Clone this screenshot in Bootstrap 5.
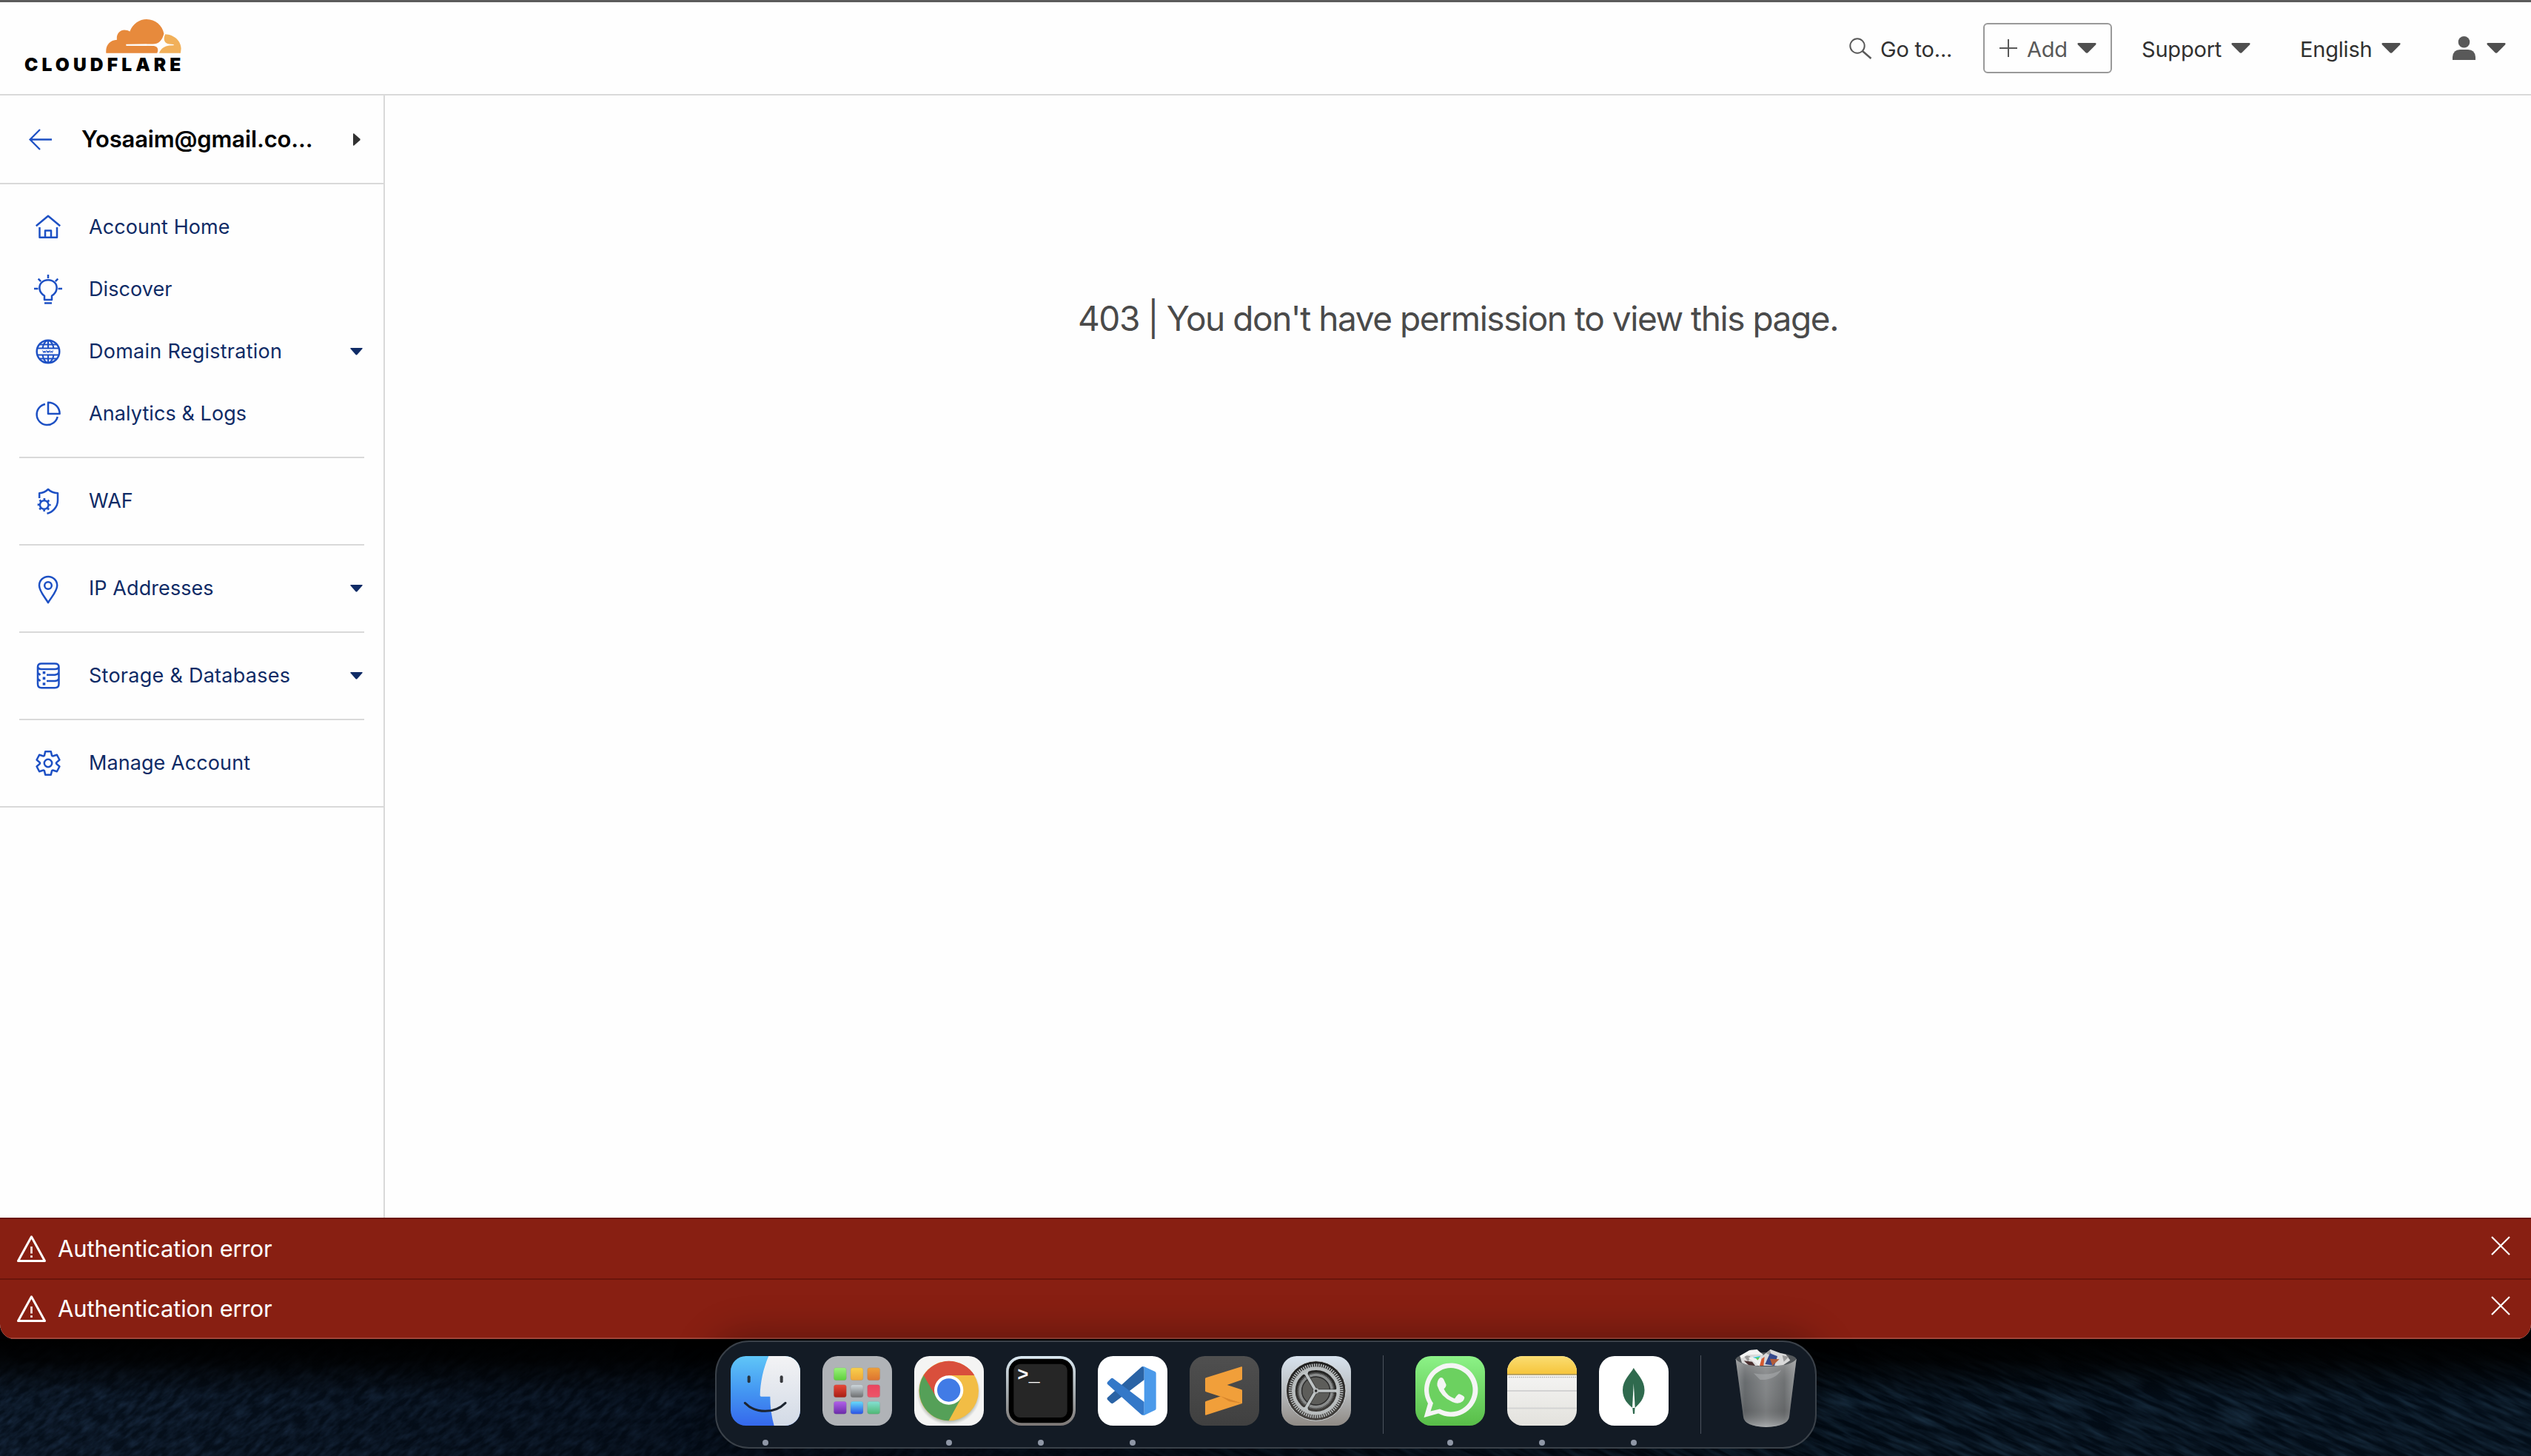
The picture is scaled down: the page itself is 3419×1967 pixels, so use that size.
<!DOCTYPE html>
<html lang="en">
<head>
<meta charset="utf-8">
<meta name="viewport" content="width=device-width, initial-scale=1">
<title>Cloudflare</title>
<link href="https://cdn.jsdelivr.net/npm/bootstrap@5.3.0/dist/css/bootstrap.min.css" rel="stylesheet">
<script src="https://cdn.jsdelivr.net/npm/bootstrap@5.3.0/dist/js/bootstrap.bundle.min.js"></script>
<style>
  body { font-family: Inter, "Liberation Sans", sans-serif; background: #000103; height: 1967px; overflow: hidden; }
  svg { display: block; flex-shrink: 0; }
  .app-window { height: 1809px; background: #fefefe; border-top: 3px solid #5c5c5c; border-radius: 0 0 20px 20px; overflow: hidden; }
  .top-line { height: 1px; margin-top: -3px; margin-bottom: 2px; background: #333; }

  .site-header { height: 126px; border-bottom: 2px solid #d9d9d9; padding: 0 34px 0 33px; color: #313131; font-size: 29px; }
  .brand-logo { width: 216px; padding-top: 23px; }
  .brand-cloud { margin-left: 110px; }
  .brand-name { font-size: 24.6px; font-weight: 900; line-height: 30px; letter-spacing: 5.1px; color: #000; white-space: nowrap; }
  .act { letter-spacing: -.2px; gap: 14px; white-space: nowrap; }
  .act span { padding-top: 3px; }
  .act-goto { width: 181px; gap: 11px; }
  .act-add { width: 174px; height: 68px; margin-right: 40px; border: 2px solid #999; border-radius: 6px; padding: 0 19px 0 20px; color: #595959; gap: 13px; font-size: 29px; }
  .act-support { width: 214px; gap: 13px; }
  .act-lang { width: 206px; gap: 13px; }
  .act-user { width: 72px; gap: 15px; }

  .side { width: 520px; border-right: 2px solid #d9d9d9; }
  .account { height: 120px; border-bottom: 2px solid #d9d9d9; padding-left: 39px; padding-right: 31px; }
  .account-name { font-size: 31px; font-weight: 600; color: #000; letter-spacing: -.15px; margin-left: 39px; }
  .side-menu { border-bottom: 2px solid #d9d9d9; }
  .side-group { margin: 0 26px; padding: 16px 2px 16px 15px; }
  .side-group + .side-group { border-top: 2px solid #d9d9d9; }
  .side-link { height: 84px; color: #0f2b66; font-size: 27px; letter-spacing: .08px; text-decoration: none; gap: 31px; }
  .side-link.loose { letter-spacing: .26px; }
  .side-link svg.ico { stroke: #1d50c4; stroke-width: 2.5; fill: none; stroke-linejoin: round; }
  .denied { font-size: 46px; letter-spacing: -1.45px; line-height: 60px; color: #4a4a4a; padding-top: 271px; }

  .err-bar { height: 82px; background: #881f12; border-top: 2px solid #6a150b; color: #fff; font-size: 31px; letter-spacing: -.15px; padding: 0 28px 0 22px; }
  .err-bar.last { border-bottom: 2px solid #a04438; }
  .err-bar .err-text { margin-left: 15px; }
  .err-bar .err-close { margin-bottom: 8px; }

  .desk { height: 158px; position: relative; padding-top: 2px; background: linear-gradient(90deg, #06101c, #030a14 30%, #020a13 60%, #030d18); }
  .wallpaper { position: absolute; inset: 0; }
  .dock { position: relative; width: 1488px; height: 146px; border: 2px solid #3a4149; border-radius: 46px; background: #131b25; padding: 19px 17px 0 19px; box-shadow: 0 0 50px 10px rgba(0,0,0,.28); }
  .dock-row { gap: 30px; }
  .dock-app { width: 94px; height: 124px; }
  .run-dot { width: 8px; height: 8px; border-radius: 50%; background: #8f97a6; margin-top: 19px; }
  .dock-sep { width: 2px; height: 106px; margin: -1px 13px 0; background: #4b525d; }
  .trash-can { margin-top: -10px; }
</style>
</head>
<body>
<svg width="0" height="0" class="position-absolute">
  <defs>
    <symbol id="tri" viewBox="0 0 26 14"><path d="M1.5 0H24.5Q26.5 .6 25 2.4L14.6 13Q13 14.4 11.4 13L1 2.4Q-.5 .6 1.5 0Z" fill="#4f4f4f"/></symbol>
    <symbol id="car" viewBox="0 0 17 10"><path d="M1 0H16Q17.2 .3 16.4 1.3L9.6 9Q8.500 10 7.400 9L.6 1.300Q-.2 .3 1 0Z" fill="#0f2b66"/></symbol>
    <symbol id="warn" viewBox="0 0 40 38"><path d="M20 2.800L38 35.500H2Z" fill="none" stroke="#fff" stroke-width="3" stroke-linejoin="round"/><path d="M20 16V25.500M20 28V31" stroke="#e9cfcb" stroke-width="3"/></symbol>
    <symbol id="cross" viewBox="0 0 26 26"><path d="M1 1L25 25M25 1L1 25" stroke="#fff" stroke-width="2.200"/></symbol>
  </defs>
</svg>

<div class="app-window d-flex flex-column">
  <div class="top-line"></div>
  <header class="site-header d-flex justify-content-between">
    <a class="brand-logo text-decoration-none" href="#">
      <svg class="brand-cloud" width="102" height="46" viewBox="424 77 299 137" preserveAspectRatio="none">
        <path fill="#e78a3c" d="M425 213C422 182 440 161 468 160C464 136 480 120 497 120Q511 120 519 126C530 95 558 77 585 77C620 77 648 102 654 135C646 165 632 176 610 177L583 177L506 178V183L614 184C629 186 634 198 627 213Z"/>
        <path fill="#fefefe" d="M504 177.500H586V183.500H504Z"/>
        <path fill="#f1b05a" d="M659 137C695 138 722 165 722 195L720 213H635C643 194 656 186 675 183L692 182Q695 180 692 178L675 177C655 173 650 158 659 137Z"/>
      </svg>
      <div class="brand-name">CLOUDFLARE</div>
    </a>
    <nav class="d-flex align-items-center">
      <div class="act act-goto d-flex align-items-center">
        <svg width="31" height="29" viewBox="0 0 31 29" fill="none" stroke="#595959" stroke-width="2"><circle cx="11" cy="11" r="9.700"/><path d="M18 18L29.500 28" stroke-width="2.500"/></svg>
        <span>Go to...</span>
      </div>
      <button class="act act-add btn d-flex align-items-center">
        <svg width="24" height="24" viewBox="0 0 24 24" stroke="#595959" stroke-width="2"><path d="M12 0V24M0 12H24"/></svg>
        <span>Add</span>
        <svg width="26" height="14"><use href="#tri"/></svg>
      </button>
      <div class="act act-support d-flex align-items-center"><span>Support</span><svg width="26" height="14"><use href="#tri"/></svg></div>
      <div class="act act-lang d-flex align-items-center"><span>English</span><svg width="26" height="14"><use href="#tri"/></svg></div>
      <div class="act act-user d-flex align-items-center">
        <svg width="31" height="32" viewBox="0 0 31 32" fill="#595959"><ellipse cx="15.500" cy="7.700" rx="7.800" ry="7.700"/><path d="M0 32V28Q1 18 10 18H21Q30 18 31 28V32Z"/></svg>
        <svg width="26" height="14"><use href="#tri"/></svg>
      </div>
    </nav>
  </header>

  <div class="d-flex flex-grow-1">
    <aside class="side">
      <div class="account d-flex align-items-center">
        <svg width="32" height="29" viewBox="0 0 32 29" fill="none" stroke="#1d50c4" stroke-width="2.300"><path d="M15 1L1.600 14.500L15 28M1.600 14.500H31"/></svg>
        <div class="account-name">Yosaaim@gmail.co...</div>
        <svg class="ms-auto" width="10" height="17" viewBox="0 0 10 17"><path d="M0 1Q0 0 1 .3L9.300 7.500Q10 8.500 9.300 9.500L1 16.700Q0 17 0 16Z" fill="#313131"/></svg>
      </div>
      <nav class="side-menu">
        <div class="side-group">
          <a class="side-link d-flex align-items-center" href="#">
            <svg class="ico" width="48" height="48" viewBox="-24 -24 48 48"><path d="M-16.200 -1.800L0 -15.300L16.200 -1.800M-11.500 0V13.800H12V0M-4 13.800V4.500H4V13.800"/></svg>Account Home</a>
          <a class="side-link d-flex align-items-center" href="#">
            <svg class="ico" width="48" height="48" viewBox="-24 -24 48 48"><path d="M-5 14V8.500C-13 4 -13 -5 -9 -9.200C-4 -14 4 -14 9 -9.200C13 -5 13 4 5 8.500V14ZM-5 18.500H5M0 -20V-15M-19 -1H-13.500M19 -1H13.500M-13.300 -14.300L-9.800 -10.800M13.300 -14.300L9.800 -10.800"/></svg>Discover</a>
          <a class="side-link loose d-flex align-items-center" href="#">
            <svg class="ico" width="48" height="48" viewBox="-24 -24 48 48"><circle r="15.300"/><path stroke-width="2.100" d="M-15 -4.500H15M-15 4.500H15M0 -15V-4.500M0 15V4.500M-7.500 -4.500Q-6 -13 -1 -15M7.500 -4.500Q6 -13 1 -15M-7.500 4.500Q-6 13 -1 15M7.500 4.500Q6 13 1 15M-11.500 -9.500H11.500M-11.500 9.500H11.500"/><path d="M-7.500 -1.500L-6 1.500L-5 -1L-4 1.500L-2.500 -1.500M-2 -1.500L-1 1.500L0 -1L1 1.500L2 -1.500M2.500 -1.500L3.500 1.500L4.500 -1L5.500 1.500L6.500 -1.500" stroke-width="1"/></svg>Domain Registration<svg class="ms-auto" width="17" height="10"><use href="#car"/></svg></a>
          <a class="side-link d-flex align-items-center" href="#">
            <svg class="ico" width="48" height="48" viewBox="-24 -24 48 48"><path d="M0 -15.200V0H15.600C15.600 -8.500 9 -15.200 0 -15.200ZM-4 -13A14.200 14.200 0 1 0 12.700 4"/></svg>Analytics &amp; Logs</a>
        </div>
        <div class="side-group">
          <a class="side-link d-flex align-items-center" href="#">
            <svg class="ico" width="48" height="48" viewBox="-24 -24 48 48"><path d="M-11.800 -4V-10.800C-7 -11 -3 -13 0 -16C3 -13 8 -11 13 -10.800V-1C13 8 6 15 -1.500 16.800"/><circle cx="-5.300" cy="5" r="5.800"/><circle cx="-5.300" cy="5" r="7.600" stroke-dasharray="2.600 3.370" stroke-dashoffset="1.300" stroke-width="2.800"/></svg>WAF</a>
        </div>
        <div class="side-group">
          <a class="side-link d-flex align-items-center" href="#">
            <svg class="ico" width="48" height="48" viewBox="-24 -24 48 48"><path d="M0 19.200C-4 12 -12 4 -12 -4A12 12 0 0 1 12.200 -4C12.200 4 4 12 0 19.200Z"/><circle cy="-4" r="4.800"/></svg>IP Addresses<svg class="ms-auto" width="17" height="10"><use href="#car"/></svg></a>
        </div>
        <div class="side-group">
          <a class="side-link loose d-flex align-items-center" href="#">
            <svg class="ico" width="48" height="48" viewBox="-24 -24 48 48"><path d="M-14 -12C-14 -15 -12 -16.500 -9 -16.500H9C12 -16.500 14.500 -15 14.500 -12V11C14.500 15 12 16.200 9 16.200H-9C-12 16.200 -14 15 -14 11ZM-14 -13C-14 -10 -12 -9 -9 -9H9C12 -9 14.500 -10 14.500 -13M-14 -4L-10.500 -1M-14 4L-10.500 7M-2 -1.300H9Q13 -1.500 14.500 -4.500M-2 7H9Q13 7 14.500 4"/><path d="M-5.500 -6V-2.400M-5.500 1.600V5.200M-5.500 9.200V12.800" stroke-width="3.600"/></svg>Storage &amp; Databases<svg class="ms-auto" width="17" height="10"><use href="#car"/></svg></a>
        </div>
        <div class="side-group">
          <a class="side-link d-flex align-items-center" href="#">
            <svg class="ico" width="48" height="48" viewBox="-24 -24 48 48"><path d="M-3.800 -15.700H3.800L5.100 -10.100L6.200 -9.500L11.900 -11.300L15.400 -4.500L11 -.6V.6L15.400 4.500L11.900 11.300L6.200 9.500L5.100 10.100L3.800 15.700H-3.800L-5.100 10.100L-6.200 9.500L-11.900 11.300L-15.400 4.500L-11 .6V-.6L-15.400 -4.500L-11.900 -11.300L-6.200 -9.500L-5.100 -10.100Z"/><circle r="5.200"/></svg>Manage Account</a>
        </div>
      </nav>
    </aside>
    <main class="flex-grow-1 text-center"><div class="denied">403 | You don't have permission to view this page.</div></main>
  </div>

  <div class="err-bar d-flex align-items-center">
    <svg width="41" height="38"><use href="#warn"/></svg><span class="err-text">Authentication error</span>
    <svg class="err-close ms-auto" width="26" height="26"><use href="#cross"/></svg>
  </div>
  <div class="err-bar last d-flex align-items-center">
    <svg width="41" height="38"><use href="#warn"/></svg><span class="err-text">Authentication error</span>
    <svg class="err-close ms-auto" width="26" height="26"><use href="#cross"/></svg>
  </div>
</div>

<div class="desk d-flex justify-content-center align-items-start">
  <svg class="wallpaper" width="3419" height="158" viewBox="0 0 3419 158">
    <defs>
      <filter id="wa" x="0" y="0" width="100%" height="100%" color-interpolation-filters="sRGB"><feTurbulence type="fractalNoise" baseFrequency=".05 .14" numOctaves="4" seed="4"/><feColorMatrix values="0 0 0 0 .1  0 0 0 0 .17  0 0 0 0 .26  1.600 0 0 0 -.5"/></filter>
      <filter id="wb" x="0" y="0" width="100%" height="100%" color-interpolation-filters="sRGB"><feTurbulence type="fractalNoise" baseFrequency=".018 .15" numOctaves="4" seed="9"/><feColorMatrix values="0 0 0 0 .09  0 0 0 0 .17  0 0 0 0 .24  1.800 0 0 0 -.6"/></filter>
      <linearGradient id="wm"><stop offset="0" stop-color="#fff"/><stop offset=".3" stop-color="#fff" stop-opacity=".5"/><stop offset=".5" stop-color="#fff" stop-opacity="0"/></linearGradient>
      <linearGradient id="wn"><stop offset=".3" stop-color="#fff" stop-opacity="0"/><stop offset=".7" stop-color="#fff"/></linearGradient>
      <linearGradient id="ws" x2="0" y2="1"><stop offset="0" stop-color="#000"/><stop offset=".18" stop-color="#000" stop-opacity=".85"/><stop offset=".5" stop-color="#000" stop-opacity="0"/></linearGradient>
      <mask id="ma"><rect width="3419" height="158" fill="url(#wm)"/></mask>
      <mask id="mb"><rect width="3419" height="158" fill="url(#wn)"/></mask>
    </defs>
    <g mask="url(#ma)"><rect x="-200" y="-200" width="2200" height="1600" transform="rotate(-35)" filter="url(#wa)"/></g>
    <g mask="url(#mb)"><rect x="700" y="-1600" width="2700" height="1800" transform="rotate(24)" filter="url(#wb)"/></g>
    <rect width="3419" height="158" fill="url(#ws)"/>
  </svg>
  <div class="dock">
    <div class="dock-row d-flex align-items-start">

      <div class="dock-app d-flex flex-column align-items-center">
        <svg width="94" height="94" viewBox="0 0 282 282">
          <defs><linearGradient id="fa" x2="0" y2="1"><stop offset="0" stop-color="#5fc6f8"/><stop offset=".5" stop-color="#4497f2"/><stop offset="1" stop-color="#3568ec"/></linearGradient><linearGradient id="fb" x2="0" y2="1"><stop offset="0" stop-color="#f3f3f5"/><stop offset="1" stop-color="#d2dae6"/></linearGradient><clipPath id="rc"><rect width="282" height="282" rx="62"/></clipPath></defs>
          <g clip-path="url(#rc)"><rect width="282" height="282" fill="url(#fa)"/><path d="M154 0C132 50 120 108 119 159Q119 164 124 164H160Q160 225 176 282H282V0Z" fill="url(#fb)"/>
          <rect x="68" y="79" width="12" height="30" rx="6" fill="#27343f"/><rect x="200" y="79" width="12" height="30" rx="6" fill="#37393d"/>
          <path d="M58 190Q90 223 140 223Q190 223 222 190" fill="none" stroke="#1c2430" stroke-width="9" stroke-linecap="round"/></g>
        </svg>
        <div class="run-dot"></div>
      </div>

      <div class="dock-app d-flex flex-column align-items-center">
        <svg width="94" height="94" viewBox="0 0 282 282">
          <defs>
            <linearGradient id="l1" x2="0" y2="1"><stop stop-color="#9bf27c"/><stop offset="1" stop-color="#5fcf3c"/></linearGradient>
            <linearGradient id="l2" x2="0" y2="1"><stop stop-color="#f8d04c"/><stop offset="1" stop-color="#eea73a"/></linearGradient>
            <linearGradient id="l3" x2="0" y2="1"><stop stop-color="#eda03a"/><stop offset="1" stop-color="#dd7330"/></linearGradient>
            <linearGradient id="l4" x2="0" y2="1"><stop stop-color="#e8493a"/><stop offset="1" stop-color="#a81f14"/></linearGradient>
            <linearGradient id="l5" x2="0" y2="1"><stop stop-color="#cfd9de"/><stop offset="1" stop-color="#6d6e70"/></linearGradient>
            <linearGradient id="l6" x2="0" y2="1"><stop stop-color="#ea445e"/><stop offset="1" stop-color="#ec5468"/></linearGradient>
            <linearGradient id="l7" x2="0" y2="1"><stop stop-color="#b160ea"/><stop offset="1" stop-color="#6a2ba8"/></linearGradient>
            <linearGradient id="l8" x2="0" y2="1"><stop stop-color="#66dcfb"/><stop offset="1" stop-color="#2a50e4"/></linearGradient>
            <linearGradient id="l9" x2="0" y2="1"><stop stop-color="#84e0d4"/><stop offset="1" stop-color="#50b773"/></linearGradient>
          </defs>
          <rect width="282" height="282" rx="62" fill="#b0b3b7"/>
          <g stroke="#888" stroke-opacity=".35" stroke-width="2">
          <rect x="46" y="47" width="51" height="51" rx="9" fill="url(#l1)"/><rect x="114" y="47" width="51" height="51" rx="9" fill="url(#l2)"/><rect x="182" y="47" width="51" height="51" rx="9" fill="url(#l3)"/>
          <rect x="46" y="116" width="51" height="51" rx="9" fill="url(#l4)"/><rect x="114" y="116" width="51" height="51" rx="9" fill="url(#l5)"/><rect x="182" y="116" width="51" height="51" rx="9" fill="url(#l6)"/>
          <rect x="46" y="184" width="51" height="51" rx="9" fill="url(#l7)"/><rect x="114" y="184" width="51" height="51" rx="9" fill="url(#l8)"/><rect x="182" y="184" width="51" height="51" rx="9" fill="url(#l9)"/></g>
        </svg>
      </div>

      <div class="dock-app d-flex flex-column align-items-center">
        <svg width="94" height="94" viewBox="0 0 282 282">
          <defs><radialGradient id="cs"><stop offset=".85" stop-color="#8a9a84" stop-opacity=".7"/><stop offset="1" stop-color="#aaa" stop-opacity="0"/></radialGradient></defs>
          <rect width="282" height="282" rx="62" fill="#f4f4f3"/>
          <circle cx="140" cy="150" r="130" fill="url(#cs)"/>
          <circle cx="140" cy="141" r="121" fill="#f2bd45"/>
          <path d="M38 78A121 121 0 0 0 140 262L190 170L140 140Z" fill="#55a058"/>
          <path d="M38 78A121 121 0 0 1 244 78H140L84 158Z" fill="#d94f3c"/>
          <circle cx="140" cy="138" r="59" fill="#fff"/><circle cx="140" cy="138" r="47" fill="#417be6"/>
        </svg>
        <div class="run-dot"></div>
      </div>

      <div class="dock-app d-flex flex-column align-items-center">
        <svg width="94" height="94" viewBox="0 0 282 282">
          <defs><linearGradient id="tg" x2="0" y2="1"><stop offset="0" stop-color="#dbe9f2"/><stop offset=".5" stop-color="#a9b0b3"/><stop offset="1" stop-color="#7d7876"/></linearGradient></defs>
          <rect width="282" height="282" rx="62" fill="url(#tg)"/><rect x="11" y="11" width="260" height="260" rx="52" fill="#000"/><rect x="31" y="32" width="217" height="217" rx="26" fill="#262626"/>
          <text x="46" y="98" font-family="Liberation Mono, monospace" font-weight="700" font-size="76" fill="#fff">&gt;_</text>
        </svg>
        <div class="run-dot"></div>
      </div>

      <div class="dock-app d-flex flex-column align-items-center">
        <svg width="94" height="94" viewBox="0 0 282 282">
          <rect width="282" height="282" rx="62" fill="#fff"/>
          <path d="M184 42L188 50V96L64 190Q58 195 52 190L40 178Q35 172 40 167L176 45Q180 41 184 42Z" fill="#2a63a5"/>
          <path d="M40 115Q35 110 40 104L52 92Q58 87 64 92L188 186V236Q182 242 176 237Z" fill="#3478c8"/>
          <path d="M188 43L232 63Q236 66 236 70V212Q236 217 232 219L188 240Q183 241 180 238Q188 236 188 228V54Q188 46 180 43Q184 41 188 43Z" fill="#4b9aea"/>
        </svg>
        <div class="run-dot"></div>
      </div>

      <div class="dock-app d-flex flex-column align-items-center">
        <svg width="94" height="94" viewBox="0 0 282 282">
          <defs><linearGradient id="sg" x2="0" y2="1"><stop stop-color="#4f4f4f"/><stop offset="1" stop-color="#404040"/></linearGradient></defs>
          <rect width="282" height="282" rx="62" fill="url(#sg)"/>
          <path d="M63 186Q63 184 66 183L126 163L213 192L66 239Q63 240 63 237Z" fill="#f19f3a"/>
          <path d="M63 92Q63 89 66 88L210 43Q213 42 213 45V93Q213 96 210 97L152 117L210 136Q213 137 213 140V190Q213 193 209 191L66 145Q63 144 63 141Z" fill="#f19f3a"/>
          <path d="M126 163L209 191L160 184Z" fill="#d9862c"/>
        </svg>
      </div>

      <div class="dock-app d-flex flex-column align-items-center">
        <svg width="94" height="94" viewBox="0 0 282 282">
          <defs><linearGradient id="gg" x2="0" y2="1"><stop stop-color="#d8e3ee"/><stop offset=".5" stop-color="#b9bdc0"/><stop offset="1" stop-color="#8f8a85"/></linearGradient><linearGradient id="gh" x2="0" y2="1"><stop stop-color="#1d1d1d"/><stop offset="1" stop-color="#45423f"/></linearGradient></defs>
          <rect width="282" height="282" rx="62" fill="url(#gg)"/>
          <circle cx="140" cy="141" r="121" fill="url(#gh)" stroke="#d0d4d6" stroke-width="3"/>
          <circle cx="140" cy="141" r="104" fill="none" stroke="#b4b8b9" stroke-width="13" stroke-dasharray="5 4.075"/>
          <circle cx="140" cy="141" r="91" fill="none" stroke="#b9bdbe" stroke-width="14"/>
          <circle cx="140" cy="141" r="64" fill="none" stroke="#8a8c8c" stroke-width="12"/>
          <circle cx="140" cy="141" r="72" fill="none" stroke="#7c7e7e" stroke-width="6" stroke-dasharray="3 3"/>
          <circle cx="140" cy="141" r="57" fill="#5d5d5a" stroke="#2b2b2b" stroke-width="4"/>
          <path d="M140 141H228M140 141L96 66M140 141L96 216" stroke="#222" stroke-opacity=".5" stroke-width="17"/>
          <path d="M140 141H228M140 141L96 66M140 141L96 216" stroke="#bfc4c5" stroke-width="11"/>
          <path d="M232 125L214 141L232 157ZM82 72L104 78L112 56ZM82 210L104 204L112 226Z" fill="#bfc4c5"/>
          <circle cx="140" cy="141" r="11" fill="#b4b8b9"/><circle cx="140" cy="141" r="5" fill="#222"/>
        </svg>
      </div>

      <div class="dock-sep"></div>

      <div class="dock-app d-flex flex-column align-items-center">
        <svg width="94" height="94" viewBox="0 0 94 94">
          <defs><linearGradient id="wg" x2="0" y2="1"><stop stop-color="#8cf287"/><stop offset="1" stop-color="#58bd48"/></linearGradient></defs>
          <rect width="94" height="94" rx="21" fill="url(#wg)"/>
          <path d="M11.500 83L17 64A36.200 36.200 0 1 1 31 77.500Z" fill="#f5f5f5"/>
          <path d="M20.500 74.500L24 63.500A29.700 29.700 0 1 1 33 71.500Z" fill="#6cd160"/>
          <path d="M33 29.500Q36 28 38 31L41.500 38.500Q42 41 38.500 44.500Q43 54 53 57.500Q56 53 58 51.500Q60 50.500 66 55Q67 57 64 61Q58 66 50 62Q34 55 29.500 40Q29 33 33 29.500Z" fill="#f5f5f5"/>
        </svg>
        <div class="run-dot"></div>
      </div>

      <div class="dock-app d-flex flex-column align-items-center">
        <svg width="94" height="94" viewBox="0 0 94 94">
          <defs><linearGradient id="na" x2="0" y2="1"><stop stop-color="#fadd72"/><stop offset="1" stop-color="#f6c53c"/></linearGradient><linearGradient id="nb" x2="0" y2="1"><stop stop-color="#fafafa"/><stop offset="1" stop-color="#e3e2dd"/></linearGradient><clipPath id="nc"><rect width="94" height="94" rx="21"/></clipPath></defs>
          <g clip-path="url(#nc)"><rect width="94" height="94" fill="url(#nb)"/><rect width="94" height="24" fill="url(#na)"/><path d="M0 24.800H94" stroke="#b09a58" stroke-width="1.800"/><path d="M2 28.500H94" stroke="#aeaeae" stroke-width="1.400" stroke-dasharray="1.400 1.400"/><path d="M0 47H94M0 70.500H94" stroke="#d3d3d3" stroke-width="1.800"/></g>
        </svg>
        <div class="run-dot"></div>
      </div>

      <div class="dock-app d-flex flex-column align-items-center">
        <svg width="94" height="94" viewBox="0 0 94 94">
          <rect width="94" height="94" rx="21" fill="#fff"/>
          <path d="M46.800 16C51 24 61.500 32 61.500 46C61.500 58 54 65 48.500 70L48 78H46L45.300 70C39 65 32 58 32 46C32 32 43 24 46.800 16Z" fill="#2f6a4e"/>
          <path d="M46.800 37L48.700 70H45Z" fill="#fff"/>
        </svg>
        <div class="run-dot"></div>
      </div>

      <div class="dock-sep"></div>

      <div class="dock-app d-flex flex-column align-items-center">
        <svg class="trash-can" width="94" height="106" viewBox="0 0 282 318">
          <defs><linearGradient id="ta"><stop stop-color="#8a8e91"/><stop offset=".15" stop-color="#64686b"/><stop offset=".5" stop-color="#85888a"/><stop offset=".8" stop-color="#6b6e70"/><stop offset="1" stop-color="#9a9d9f"/></linearGradient><linearGradient id="tb" x2="0" y2="1"><stop stop-color="#bbb" stop-opacity=".55"/><stop offset=".35" stop-color="#888" stop-opacity=".1"/><stop offset=".75" stop-color="#444" stop-opacity=".2"/><stop offset="1" stop-color="#c5c8ca" stop-opacity=".6"/></linearGradient></defs>
          <ellipse cx="134" cy="43" rx="123" ry="28" fill="#54585b"/>
          <g transform="translate(0 -3)"><path d="M28 32L72 8L98 6L122 30L152 6L190 20L214 26L232 50L200 72H60L36 60Z" fill="#d9d9d9"/>
          <path d="M40 28L70 34L62 56ZM150 10L158 34L134 22ZM200 30L226 36L206 56Z" fill="#9b9b9b"/>
          <path d="M28 32L66 10L96 8L124 28L100 26L60 28L36 42Z" fill="#f4f4f4"/>
          <path d="M62 40L104 32L124 60L108 74Z" fill="#efefef"/><path d="M80 38L112 32L102 46Z" fill="#41c8de"/><path d="M92 40L108 38L100 50Z" fill="#6bcb4b"/><path d="M116 44L128 36L124 72H108Z" fill="#d55a30"/>
          <path d="M150 22L180 34L168 72L130 66Z" fill="#35498c"/><path d="M150 44L188 46L160 72Z" fill="#b25d3a"/><path d="M44 52L78 56L90 72H66Z" fill="#4a3030"/></g>
          <path d="M11 42Q30 70 134 72Q240 70 257 42L228 276Q222 315 134 318Q46 315 42 276Z" fill="url(#ta)"/>
          <path d="M11 42Q30 70 134 72Q240 70 257 42L228 276Q222 315 134 318Q46 315 42 276Z" fill="url(#tb)"/>
          <path d="M84 100Q150 112 196 86Q170 128 110 126Z" fill="#b5b8ba" opacity=".45"/>
        </svg>
      </div>

    </div>
  </div>
</div>
</body>
</html>
